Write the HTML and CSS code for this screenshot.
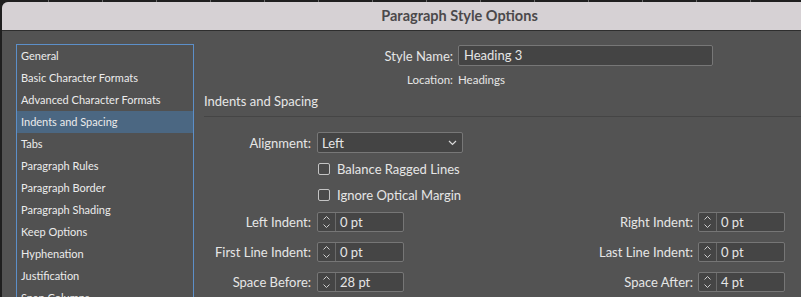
FILE: index.html
```html
<!DOCTYPE html>
<html>
<head>
<meta charset="utf-8">
<link rel="stylesheet" href="styles.css">
</head>
<body>
<div class="desk">
  <div class="window">
    <div class="titlebar">Paragraph Style Options</div>
    <div class="content">
      <div class="sidebar">
        <ul class="list">
          <li>General</li>
          <li>Basic Character Formats</li>
          <li>Advanced Character Formats</li>
          <li class="selected">Indents and Spacing</li>
          <li>Tabs</li>
          <li>Paragraph Rules</li>
          <li>Paragraph Border</li>
          <li>Paragraph Shading</li>
          <li>Keep Options</li>
          <li>Hyphenation</li>
          <li>Justification</li>
          <li>Span Columns</li>
        </ul>
      </div>
      <div class="main">
        <div class="name-row">
          <span class="label">Style Name:</span>
          <div class="textfield">Heading 3</div>
        </div>
        <div class="loc-row">
          <span class="label small">Location:</span>
          <span class="small">Headings</span>
        </div>
        <div class="section-title">Indents and Spacing</div>
        <div class="section">
          <div class="align-row">
            <span class="label">Alignment:</span>
            <div class="select">
              <span>Left</span>
              <svg class="chev" width="9" height="6" viewBox="0 0 9 6"><path d="M1 1 L4.5 4.5 L8 1" fill="none" stroke="#d8d8d8" stroke-width="1.2"/></svg>
            </div>
          </div>
          <label class="check"><span class="box"></span>Balance Ragged Lines</label>
          <label class="check"><span class="box"></span>Ignore Optical Margin</label>
          <div class="grid">
            <span class="label">Left Indent:</span>
            <div class="spin"><span class="arrows"><svg width="9" height="16" viewBox="0 0 9 16"><path d="M1.5 5.5 L4.5 2.5 L7.5 5.5 M1.5 10.5 L4.5 13.5 L7.5 10.5" fill="none" stroke="#cfcfcf" stroke-width="1"/></svg></span><span class="val">0 pt</span></div>
            <span class="label right">Right Indent:</span>
            <div class="spin"><span class="arrows"><svg width="9" height="16" viewBox="0 0 9 16"><path d="M1.5 5.5 L4.5 2.5 L7.5 5.5 M1.5 10.5 L4.5 13.5 L7.5 10.5" fill="none" stroke="#cfcfcf" stroke-width="1"/></svg></span><span class="val">0 pt</span></div>

            <span class="label">First Line Indent:</span>
            <div class="spin"><span class="arrows"><svg width="9" height="16" viewBox="0 0 9 16"><path d="M1.5 5.5 L4.5 2.5 L7.5 5.5 M1.5 10.5 L4.5 13.5 L7.5 10.5" fill="none" stroke="#cfcfcf" stroke-width="1"/></svg></span><span class="val">0 pt</span></div>
            <span class="label right">Last Line Indent:</span>
            <div class="spin"><span class="arrows"><svg width="9" height="16" viewBox="0 0 9 16"><path d="M1.5 5.5 L4.5 2.5 L7.5 5.5 M1.5 10.5 L4.5 13.5 L7.5 10.5" fill="none" stroke="#cfcfcf" stroke-width="1"/></svg></span><span class="val">0 pt</span></div>

            <span class="label">Space Before:</span>
            <div class="spin"><span class="arrows"><svg width="9" height="16" viewBox="0 0 9 16"><path d="M1.5 5.5 L4.5 2.5 L7.5 5.5 M1.5 10.5 L4.5 13.5 L7.5 10.5" fill="none" stroke="#cfcfcf" stroke-width="1"/></svg></span><span class="val">28 pt</span></div>
            <span class="label right">Space After:</span>
            <div class="spin"><span class="arrows"><svg width="9" height="16" viewBox="0 0 9 16"><path d="M1.5 5.5 L4.5 2.5 L7.5 5.5 M1.5 10.5 L4.5 13.5 L7.5 10.5" fill="none" stroke="#cfcfcf" stroke-width="1"/></svg></span><span class="val">4 pt</span></div>
          </div>
        </div>
      </div>
    </div>
  </div>
</div>
</body>
</html>
```

FILE: styles.css
```css
* { box-sizing: border-box; }
html, body { margin: 0; padding: 0; }
body {
  width: 801px;
  height: 297px;
  overflow: hidden;
  background: #1f1f1f;
  font-family: "Lato", "Open Sans", sans-serif;
  font-size: 13px;
  color: #e6e6e6;
}
.desk {
  height: 297px;
  padding: 2px 0 0 2px;
  background-color: #1f1f1f;
  background-image: repeating-linear-gradient(90deg, transparent 0 48px, #6a6a6a 48px 49px, transparent 49px 54px);
  background-size: 100% 3px;
  background-repeat: no-repeat;
}
.window {
  width: 799px;
  height: 295px;
  background: #535353;
  border-top-left-radius: 6px;
  overflow: hidden;
}
.titlebar {
  height: 29px;
  background: #d6d1d4;
  border-bottom: 1px solid #2e2e2e;
  color: #4b494b;
  font-weight: 700;
  font-size: 14.5px;
  display: flex;
  align-items: center;
  justify-content: center;
  padding: 0 0 2px 116px;
}
.content {
  display: flex;
}
.sidebar {
  padding: 13px 0 0 14px;
}
.list {
  list-style: none;
  margin: 0;
  padding: 0;
  width: 178px;
  height: 280px;
  border: 1px solid #5c8fc9;
  background: #515151;
  font-size: 11px;
}
.list li {
  height: 22px;
  line-height: 22px;
  padding-left: 4px;
  color: #ececec;
  white-space: nowrap;
}
.list li.selected {
  background: #4b6782;
}
.main {
  flex: 1;
  padding: 14px 0 0 10px;
}
.label {
  white-space: nowrap;
}
.name-row {
  display: flex;
  align-items: center;
  height: 21px;
  margin-left: 170px;
}
.name-row .label { width: 79px; text-align: right; margin-right: 5px; }
.textfield {
  width: 255px;
  height: 21px;
  background: #444444;
  border: 1px solid #777;
  border-radius: 2px;
  padding-left: 5px;
  line-height: 19px;
}
.loc-row {
  margin-left: 170px;
  margin-top: 4px;
  height: 18px;
  display: flex;
  align-items: center;
}
.loc-row .label { width: 79px; text-align: right; margin-right: 5px; }
.small { font-size: 11.5px; }
.section-title {
  margin-top: 4px;
  line-height: 19px;
  font-size: 13px;
  border-bottom: 1px solid #454545;
  padding-bottom: 5px;
}
.section {
  padding-top: 15px;
  padding-right: 16px;
}
.align-row {
  display: flex;
  align-items: center;
  height: 21px;
}
.align-row .label { width: 107px; text-align: right; margin-right: 6px; }
.select {
  width: 146px;
  height: 21px;
  background: #444444;
  border: 1px solid #777;
  border-radius: 2px;
  display: flex;
  align-items: center;
  justify-content: space-between;
  padding: 0 5px 0 4px;
}
.chev { margin-top: 1px; }
.check {
  display: flex;
  align-items: center;
  margin-left: 114px;
  height: 12px;
  margin-top: 10px;
}
.check + .check { margin-top: 14px; }
.box {
  width: 12px;
  height: 12px;
  border: 1px solid #c4c4c4;
  border-radius: 2px;
  margin-right: 7px;
  background: #4a4a4a;
}
.grid {
  margin-top: 11px;
  display: grid;
  grid-template-columns: 107px 87px 1fr 87px;
  column-gap: 6px;
  row-gap: 10px;
  align-items: center;
}
.grid .label { text-align: right; }
.grid .label.right { margin-right: -1px; }
.spin {
  height: 20px;
  background: #454545;
  border: 1px solid #767676;
  border-radius: 2px;
  display: flex;
  align-items: center;
}
.arrows {
  width: 18px;
  height: 100%;
  border-right: 1px solid #6a6a6a;
  display: flex;
  align-items: center;
  justify-content: center;
}
.val { padding-left: 4px; }
```
